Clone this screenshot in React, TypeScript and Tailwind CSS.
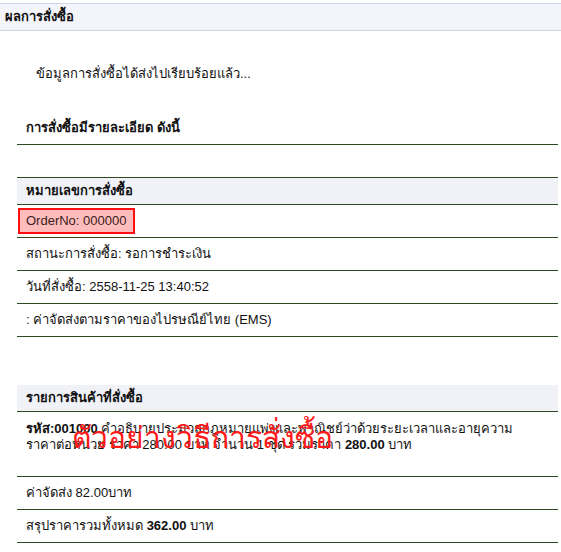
import React from "react";

const line = "border-b border-[#2e4a1e]";

export default function App() {
  return (
    <div
      className="w-[561px] h-[552px] bg-white text-[13px] text-[#111] leading-[16px] overflow-hidden"
      style={{ fontFamily: '"Liberation Sans", "Noto Sans", sans-serif' }}
    >
      <div className="mt-[3px] h-[28px] border-y border-[#cfd6e8] bg-[#f4f5fa] flex items-center pl-[5px] font-bold">
        ผลการสั่งซื้อ
      </div>
      <div className="h-[80px] pt-[35px] pl-[36px]">ข้อมูลการสั่งซื้อได้ส่งไปเรียบร้อยแล้ว...</div>
      <div className="ml-[17px] w-[541px]">
        <div className={`h-[34px] flex items-center pl-[9px] font-bold ${line}`}>การสั่งซื้อมีรายละเอียด ดังนี้</div>
        <div className={`h-[33px] ${line}`}></div>
        <div className={`h-[27px] bg-[#f0f2f8] flex items-center pl-[9px] font-bold ${line}`}>หมายเลขการสั่งซื้อ</div>
        <div className={`h-[33px] flex items-center ${line}`}>
          <div className="ml-[1px] h-[26px] w-[117px] border-2 border-[#ff1010] bg-[#ffbcbc] flex items-center pl-[6px] text-[#3a2020]">
            OrderNo: 000000
          </div>
        </div>
        <div className={`h-[33px] flex items-center pl-[9px] ${line}`}>สถานะการสั่งซื้อ: รอการชำระเงิน</div>
        <div className={`h-[33px] flex items-center pl-[9px] ${line}`}>วันที่สั่งซื้อ: 2558-11-25 13:40:52</div>
        <div className={`h-[33px] flex items-center pl-[9px] ${line}`}>: ค่าจัดส่งตามราคาของไปรษณีย์ไทย (EMS)</div>
        <div className="h-[48px]"></div>
        <div className={`h-[27px] bg-[#f0f2f8] flex items-center pl-[9px] font-bold ${line}`}>รายการสินค้าที่สั่งซื้อ</div>
        <div className={`relative h-[65px] pt-[9px] pl-[9px] ${line}`}>
          <div>
            <b>รหัส:001000</b> คำอธิบายประมวลกฎหมายแพ่งและพาณิชย์ว่าด้วยระยะเวลาและอายุความ
          </div>
          <div>
            ราคาต่อหน่วย ราคา 280.00 บาท จำนวน 1 ชุด รวมราคา <b>280.00</b> บาท
          </div>
          <div className="absolute left-[55px] top-[5px] text-[30px] leading-[42px] text-[#ff1a1a] whitespace-nowrap">
            ตัวอย่างวิธีการสั่งซื้อ
          </div>
        </div>
        <div className={`h-[33px] flex items-center pl-[9px] ${line}`}>ค่าจัดส่ง 82.00บาท</div>
        <div className={`h-[33px] flex items-center pl-[9px] ${line}`}>
          สรุปราคารวมทั้งหมด&nbsp;<b>362.00</b>&nbsp;บาท
        </div>
      </div>
    </div>
  );
}
